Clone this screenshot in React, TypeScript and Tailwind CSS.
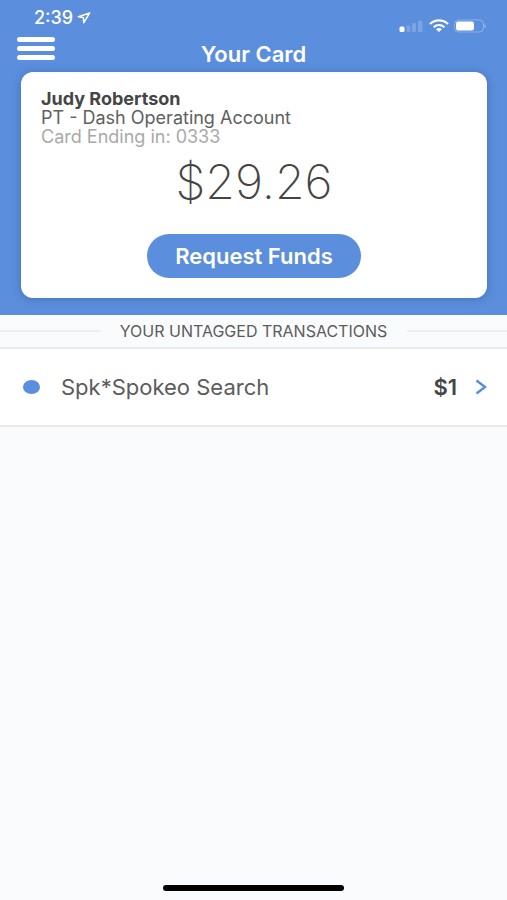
function StatusBar() {
  return (
    <div className="flex h-9 items-center justify-between pr-5 pl-[34px]">
      <div className="flex items-center gap-1">
        <span className="text-[18px] leading-5 font-medium">2:39</span>
        <svg width="14" height="12" viewBox="0 0 14 12" fill="none" stroke="currentColor" strokeWidth="1.500" strokeLinejoin="round" aria-hidden="true">
          <path d="M12.600 1 1.400 4.800l5 .8.300 5.200z" />
        </svg>
      </div>
      <div className="flex items-center gap-1 pt-4">
        <svg width="26" height="14" viewBox="0 0 26 14" fill="currentColor" aria-hidden="true">
          <rect x="0.500" y="7.500" width="5" height="5.500" rx="1.500" />
          <g opacity="0.2">
            <rect x="7.500" y="6.500" width="4" height="6.500" rx="1" />
            <rect x="13" y="4" width="4" height="9" rx="1" />
            <rect x="19" y="1.500" width="4.500" height="11.500" rx="1" />
          </g>
        </svg>
        <svg width="20" height="14" viewBox="0 0 20 14" fill="none" stroke="currentColor" strokeWidth="2.200" aria-hidden="true">
          <path d="M1 5C6 .2 14 .2 19 5" />
          <path d="M4.600 8.200c3.200-2.900 7.600-2.900 10.800 0" />
          <path d="M10 13 7 10.300c1.800-1.600 4.200-1.600 6 0z" fill="currentColor" stroke="none" />
        </svg>
        <svg width="34" height="14" viewBox="0 0 34 14" fill="none" aria-hidden="true">
          <rect x="1.500" y="1" width="29" height="12" rx="4" stroke="currentColor" strokeOpacity="0.3" />
          <rect x="3" y="2.500" width="18" height="9" rx="2" fill="currentColor" />
          <path d="M31.500 5v4c1.800-.6 1.800-3.400 0-4z" fill="currentColor" fillOpacity="0.4" />
        </svg>
      </div>
    </div>
  );
}

function Header() {
  return (
    <div className="grid h-9 grid-cols-[1fr_auto_1fr] items-center px-[17px]">
      <button type="button" aria-label="Open menu" className="flex w-[38px] flex-col gap-1 self-start pt-px">
        <span className="h-[5px] rounded-full bg-white" />
        <span className="h-[5px] rounded-full bg-white" />
        <span className="h-[5px] rounded-full bg-white" />
      </button>
      <h1 className="text-[22px] leading-6 font-semibold">Your Card</h1>
    </div>
  );
}

function AccountCard() {
  return (
    <section className="mr-5 ml-[21px] flex flex-col rounded-xl bg-white px-5 pt-[17px] pb-5 text-[#454545] shadow-[0_1px_8px_rgba(30,60,110,0.35)]">
      <div className="text-[18px] leading-[19px]">
        <h2 className="font-bold">Judy Robertson</h2>
        <p className="text-[#606060]">PT - Dash Operating Account</p>
        <p className="text-[#a9a9a9]">Card Ending in: 0333</p>
      </div>
      <p className="mt-3 text-center text-[48px] leading-12 font-extralight">$29.26</p>
      <button type="button" className="mt-7 h-11 w-[214px] self-center rounded-full bg-[#5b8edc] text-[22px] leading-6 font-semibold text-white">
        Request Funds
      </button>
    </section>
  );
}

function Transactions() {
  return (
    <section>
      <div className="flex h-8 items-center gap-5 text-[#5c5c5c]">
        <span className="h-0.5 flex-1 bg-[#eceef0]" />
        <h2 className="text-[16px] leading-5">YOUR UNTAGGED TRANSACTIONS</h2>
        <span className="h-0.5 flex-1 bg-[#eceef0]" />
      </div>
      <ul>
        <li className="border-y-2 border-[#e7e9eb] bg-white">
          <a href="#transaction" className="flex h-[76px] items-center pr-5 pl-[23px] text-[22px] leading-6 text-[#5c5c5c]">
            <span className="h-3.5 w-[17px] rounded-[50%] bg-[#5b8edc]" />
            <span className="ml-[21px] flex-1">Spk*Spokeo Search</span>
            <span className="font-semibold text-[#454545]">$1</span>
            <svg className="ml-[18px]" width="12" height="16" viewBox="0 0 12 16" fill="none" stroke="#5b8edc" strokeWidth="2.500" aria-hidden="true">
              <path d="m1.500 1.500 8.500 6.500-8.500 6.500" />
            </svg>
          </a>
        </li>
      </ul>
    </section>
  );
}

export default function App() {
  return (
    <main className="flex min-h-screen flex-col bg-[#fafbfd] font-['Inter','Liberation_Sans',sans-serif]">
      <header className="bg-[#5b8edc] pb-[17px] text-white">
        <StatusBar />
        <Header />
        <AccountCard />
      </header>
      <Transactions />
      <div className="mt-auto mb-[9px] h-1.5 w-[181px] self-center rounded-full bg-black" />
    </main>
  );
}
